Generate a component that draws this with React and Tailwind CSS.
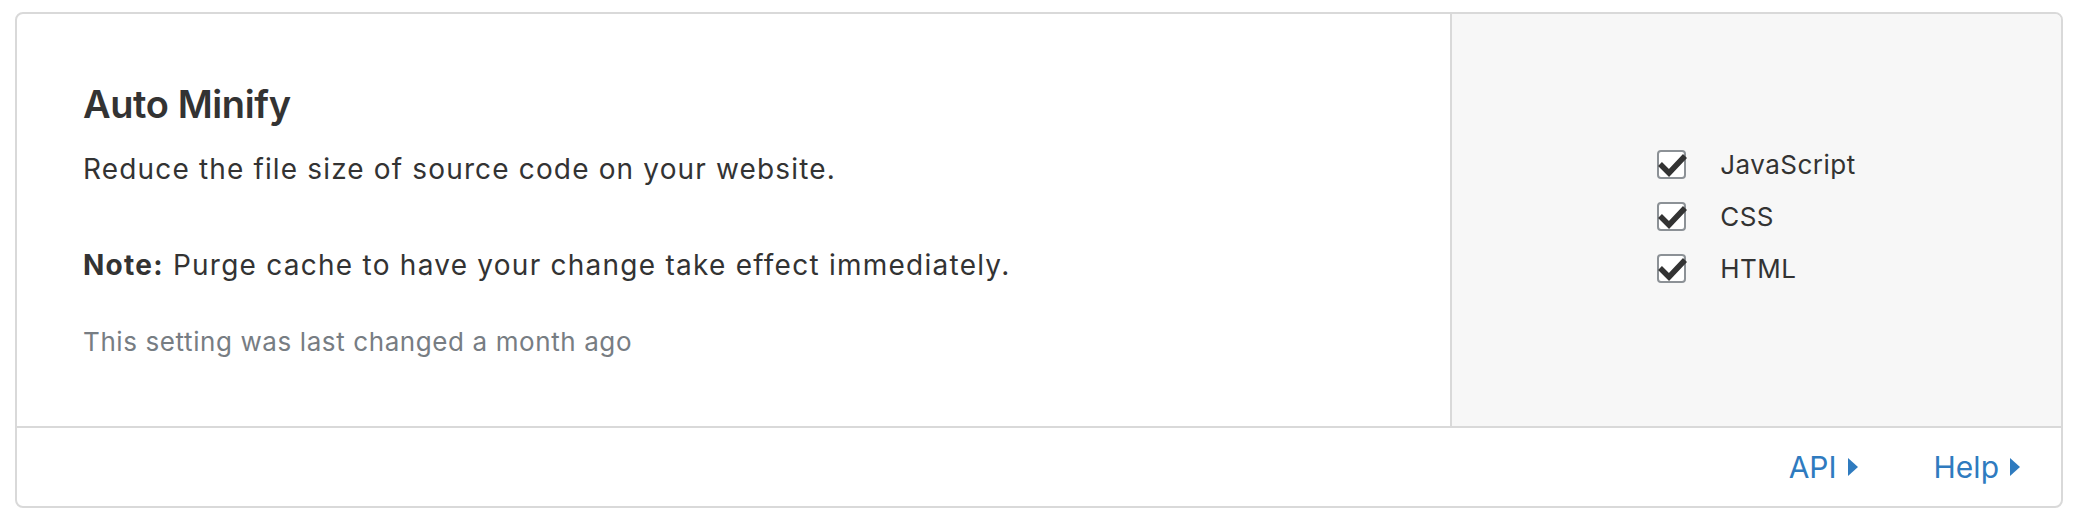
import React from 'react';

function Check() {
  return (
    <span className="relative block w-[29px] h-[29px] rounded-[4px] border-2 border-[#8c9196] bg-white">
      <svg className="absolute left-[-2px] top-[-2px]" width="31" height="31" viewBox="0 0 31 31">
        <polyline points="3,14 12,23 28,6" fill="none" stroke="#333" strokeWidth="5.5" />
      </svg>
    </span>
  );
}

function Caret() {
  return (
    <svg width="10" height="18" viewBox="0 0 10 18" className="ml-[11px]">
      <polygon points="0,0 10,9 0,18" fill="#2f7bbf" />
    </svg>
  );
}

const options = ['JavaScript', 'CSS', 'HTML'];

export default function App() {
  return (
    <div className="bg-white pl-[15px] pr-[17px] py-[12px] font-[Inter,sans-serif] text-[#333]">
      <div className="border-2 border-[#d9d9d9] rounded-[8px] overflow-hidden">
        <div className="flex h-[412px]">
          <div className="w-[1433px] flex flex-col justify-center pl-[66px]">
            <h2 className="text-[38px] leading-[48px] font-semibold tracking-[-0.4px]">Auto Minify</h2>
            <p className="mt-[21px] text-[28px] leading-[40px] tracking-[1.15px]">Reduce the file size of source code on your website.</p>
            <p className="mt-[56px] text-[28px] leading-[40px] tracking-[1.25px]">
              <span className="font-bold">Note:</span> Purge cache to have your change take effect immediately.
            </p>
            <p className="mt-[39px] text-[26px] leading-[36px] tracking-[0.6px] text-[#777d83]">This setting was last changed a month ago</p>
          </div>
          <div className="flex-1 border-l-2 border-[#d9d9d9] bg-[#f7f7f7] flex items-center justify-center pb-[8px]">
            <div className="flex flex-col gap-[23px]">
              {options.map((o) => (
                <label key={o} className="flex items-center gap-[34px]">
                  <Check />
                  <span className="text-[26px] leading-[29px] tracking-[0.5px]">{o}</span>
                </label>
              ))}
            </div>
          </div>
        </div>
        <div className="border-t-2 border-[#d9d9d9] h-[80px] flex items-center justify-end pr-[41px] gap-[76px] text-[30px] text-[#2f7bbf]">
          <a className="flex items-center">API<Caret /></a>
          <a className="flex items-center">Help<Caret /></a>
        </div>
      </div>
    </div>
  );
}
